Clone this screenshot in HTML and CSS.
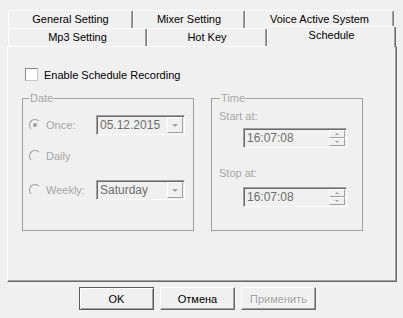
FILE: index.html
```html
<!DOCTYPE html>
<html lang="en">
<head>
    <meta charset="UTF-8">
    <title>Schedule</title>
    <link rel="stylesheet" href="styles.css">
</head>
<body>
    <div class="tabs">
        <div class="tab-row">
            <div class="tab" style="width: 125px">General Setting</div>
            <div class="tab" style="width: 112px">Mixer Setting</div>
            <div class="tab" style="width: 149px">Voice Active System</div>
        </div>
        <div class="tab-row">
            <div class="tab" style="width: 139px">Mp3 Setting</div>
            <div class="tab" style="width: 120px">Hot Key</div>
            <div class="tab tab-active" style="width: 129px">Schedule</div>
        </div>
    </div>

    <div class="panel">
        <label class="check-row"><span class="checkbox"></span>Enable Schedule Recording</label>

        <div class="groups">
            <fieldset class="group group-date">
                <legend>Date</legend>
                <div class="radio-row">
                    <span class="radio checked"></span>
                    <span class="radio-label">Once:</span>
                    <div class="combo"><span class="combo-text">05.12.2015</span><span class="combo-btn"></span></div>
                </div>
                <div class="radio-row row-daily">
                    <span class="radio"></span>
                    <span class="radio-label">Daily</span>
                </div>
                <div class="radio-row row-weekly">
                    <span class="radio"></span>
                    <span class="radio-label">Weekly:</span>
                    <div class="combo"><span class="combo-text">Saturday</span><span class="combo-btn"></span></div>
                </div>
            </fieldset>

            <fieldset class="group group-time">
                <legend>Time</legend>
                <div class="field-label">Start at:</div>
                <div class="spin">
                    <span class="spin-text">16:07:08</span>
                    <span class="spin-btns"><span class="spin-up"></span><span class="spin-down"></span></span>
                </div>
                <div class="field-label label-stop">Stop at:</div>
                <div class="spin spin-stop">
                    <span class="spin-text">16:07:08</span>
                    <span class="spin-btns"><span class="spin-up"></span><span class="spin-down"></span></span>
                </div>
            </fieldset>
        </div>
    </div>

    <div class="buttons">
        <button class="btn btn-default">OK</button>
        <button class="btn">Отмена</button>
        <button class="btn" disabled>Применить</button>
    </div>
</body>
</html>
```

FILE: styles.css
```css
body {
    margin: 0;
    background-color: #f0f0f0;
    font-family: "Liberation Sans", Arial, sans-serif;
    font-size: 11px;
    color: #000;
    width: 403px;
    height: 318px;
    overflow: hidden;
}

/* Tabs */
.tabs {
    margin-top: 10px;
    margin-left: 8px;
}
.tab-row {
    display: flex;
    height: 18px;
}
.tab {
    box-sizing: border-box;
    height: 18px;
    line-height: 16px;
    text-align: center;
    border-top: 1px solid #fff;
    border-left: 1px solid #fff;
    border-right: 1px solid #808080;
    border-radius: 2px 2px 0 0;
    box-shadow: inset -1px 0 0 #a0a0a0;
}
.tab-active {
    position: relative;
    z-index: 1;
    height: 21px;
    margin-top: -2px;
    line-height: 16px;
    background-color: #f0f0f0;
    border-right-color: #696969;
}

/* Panel */
.panel {
    box-sizing: border-box;
    margin-left: 7px;
    width: 390px;
    height: 236px;
    border-top: 1px solid #fff;
    border-left: 1px solid #fff;
    border-right: 1px solid #696969;
    border-bottom: 1px solid #696969;
    box-shadow: inset -1px -1px 0 #a0a0a0;
    padding: 21px 0 0 14px;
}
.check-row {
    display: flex;
    align-items: center;
    height: 13px;
    margin-left: 3px;
}
.checkbox {
    box-sizing: border-box;
    width: 13px;
    height: 13px;
    margin-right: 6px;
    background-color: #fff;
    border: 1px solid;
    border-color: #8a8a8a #c8c8c8 #c8c8c8 #8a8a8a;
}

/* Group boxes */
.groups {
    display: flex;
    gap: 17px;
    margin-top: 10px;
}
.group {
    margin: 0;
    height: 140px;
    box-sizing: border-box;
    border: 1px solid #a0a0a0;
    color: #a6a6a6;
}
.group legend {
    padding: 0 1px;
    line-height: 14px;
}
.group-date {
    width: 172px;
    padding: 10px 6px 0 6px;
}
.group-time {
    width: 152px;
    padding: 5px 7px 0 7px;
}
.group-time legend {
    margin-left: 1px;
}

/* Radios */
.radio-row {
    display: flex;
    align-items: center;
    height: 20px;
}
.row-daily {
    margin-top: 11px;
}
.row-weekly {
    margin-top: 14px;
}
.radio {
    box-sizing: border-box;
    width: 12px;
    height: 12px;
    margin-right: 5px;
    border-radius: 50%;
    border: 1px solid;
    border-color: #9a9a9a #f4f4f4 #f4f4f4 #9a9a9a;
    display: flex;
    align-items: center;
    justify-content: center;
}
.radio.checked::after {
    content: "";
    width: 4px;
    height: 4px;
    border-radius: 50%;
    background-color: #a0a0a0;
}
.radio-label {
    width: 50px;
}

/* Combo boxes */
.combo {
    box-sizing: border-box;
    display: flex;
    align-items: center;
    justify-content: space-between;
    width: 89px;
    height: 20px;
    padding: 0 1px 0 3px;
    border: 1px solid;
    border-color: #a0a0a0 #fff #fff #a0a0a0;
    box-shadow: inset 1px 1px 0 #696969;
    color: #6d6d6d;
    font-size: 12px;
}
.combo-btn {
    box-sizing: border-box;
    width: 16px;
    height: 16px;
    border: 1px solid;
    border-color: #fff #a0a0a0 #a0a0a0 #fff;
    display: flex;
    align-items: center;
    justify-content: center;
}
.combo-btn::after {
    content: "";
    border-left: 3px solid transparent;
    border-right: 3px solid transparent;
    border-top: 3px solid #a0a0a0;
}

/* Time fields */
.field-label {
    line-height: 13px;
}
.label-stop {
    margin-top: 19px;
}
.spin {
    box-sizing: border-box;
    display: flex;
    align-items: center;
    justify-content: space-between;
    width: 104px;
    height: 20px;
    margin: 5px 0 0 24px;
    padding: 0 1px 0 3px;
    border: 1px solid;
    border-color: #a0a0a0 #fff #fff #a0a0a0;
    box-shadow: inset 1px 1px 0 #696969;
    color: #6d6d6d;
    font-size: 12px;
}
.spin-stop {
    margin-top: 7px;
}
.spin-btns {
    display: flex;
    flex-direction: column;
    width: 16px;
}
.spin-up,
.spin-down {
    box-sizing: border-box;
    height: 8px;
    border: 1px solid;
    border-color: #fff #a0a0a0 #a0a0a0 #fff;
    display: flex;
    align-items: center;
    justify-content: center;
}
.spin-up::after {
    content: "";
    border-left: 2px solid transparent;
    border-right: 2px solid transparent;
    border-bottom: 2px solid #a0a0a0;
}
.spin-down::after {
    content: "";
    border-left: 2px solid transparent;
    border-right: 2px solid transparent;
    border-top: 2px solid #a0a0a0;
}

/* Dialog buttons */
.buttons {
    display: flex;
    gap: 6px;
    margin: 5px 0 0 79px;
}
.btn {
    box-sizing: border-box;
    width: 75px;
    height: 23px;
    padding: 0;
    font-family: "Liberation Sans", Arial, sans-serif;
    font-size: 11px;
    color: #000;
    background-color: #f0f0f0;
    border: 1px solid;
    border-color: #fff #696969 #696969 #fff;
    box-shadow: inset -1px -1px 0 #a0a0a0;
}
.btn-default {
    border-color: #5a5a5a;
    box-shadow: inset 1px 1px 0 #fff, inset -1px -1px 0 #a0a0a0;
}
.btn:disabled {
    color: #a0a0a0;
    text-shadow: 1px 1px 0 #fff;
}
```
